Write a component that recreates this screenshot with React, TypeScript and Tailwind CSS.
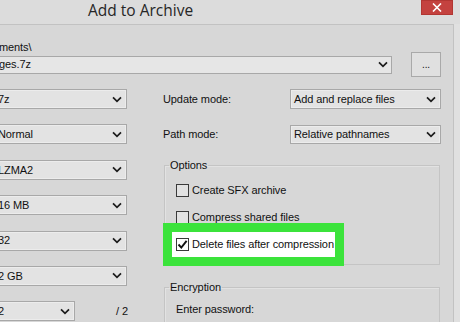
import type { ReactNode } from 'react'

const Chevron = () => (
  <svg width="10" height="7" viewBox="0 0 10 7" className="shrink-0">
    <path d="M1 1.3 L5 5.3 L9 1.3" fill="none" stroke="#1c1c1c" strokeWidth="1.7" />
  </svg>
)

function Combo({ value, className }: { value: string; className: string }) {
  return (
    <div
      className={`flex items-center justify-between border border-[#a8a8a8] bg-[#e3e3e3] pl-[7px] pr-[4px] shadow-[inset_0_0_0_1px_#ececec] ${className}`}
    >
      <span className="whitespace-nowrap">{value}</span>
      <Chevron />
    </div>
  )
}

function CheckRow({ label, checked, highlight }: { label: string; checked?: boolean; highlight?: boolean }) {
  return (
    <div
      className={`flex h-[25px] w-[163px] items-center gap-[3px] pl-[4px] ${
        highlight ? 'bg-white outline-solid outline-[9px] outline-[#3be33b]' : ''
      }`}
    >
      <div
        className={`flex h-[13px] w-[13px] shrink-0 items-center justify-center border border-[#3a3a3a] ${
          checked ? 'bg-white' : 'bg-[#e2e2e2]'
        }`}
      >
        {checked && (
          <svg width="11" height="11" viewBox="0 0 11 11">
            <path d="M1.5 5.5 L4.3 8.6 L9.6 1.8" fill="none" stroke="#111" strokeWidth="1.9" />
          </svg>
        )}
      </div>
      <span className="whitespace-nowrap">{label}</span>
    </div>
  )
}

function Group({ title, children, className }: { title: string; children: ReactNode; className?: string }) {
  return (
    <fieldset className={`ml-[1px] mr-[1px] border border-[#c4c4c4] shadow-[inset_1px_1px_0_#e2e2e2] ${className ?? ''}`}>
      <legend className="ml-[4px] px-[1px] leading-[14px]">{title}</legend>
      {children}
    </fieldset>
  )
}

export default function App() {
  const leftCombos = ['7z', 'Normal', 'LZMA2', '16 MB', '32', '2 GB']

  return (
    <div className="h-[322px] w-[460px] overflow-hidden bg-[#dcdcdc] text-[11px] tracking-[-0.1px] text-[#111] [font-family:'Liberation_Sans',Arial,sans-serif]">
      {/* title bar */}
      <div className="flex h-[24px] items-start">
        <div className="pl-[88px] text-[15.5px] leading-[20px] tracking-normal text-[#262626] [font-family:'Open_Sans','Noto_Sans',sans-serif]">
          Add to Archive
        </div>
        <div className="ml-auto mr-[7px] flex h-[15px] w-[32px] items-center justify-center bg-[#c4423f] shadow-[inset_0_0_0_1px_#b23632]">
          <svg width="10" height="9" viewBox="0 0 10 9">
            <path d="M1 0.5 L9 8.5 M9 0.5 L1 8.5" stroke="#fff" strokeWidth="1.6" />
          </svg>
        </div>
      </div>

      <div className="flex">
        {/* client area */}
        <div className="h-[298px] w-[454px] border-r border-t border-[#c2c2c2] bg-[#d7d7d7] pt-[15px]">
          <div className="-ml-[1px] leading-[14px]">ments\</div>
          <div className="-mt-[2px] flex items-center">
            <div className="-ml-[10px] flex h-[18px] w-[402px] items-center justify-between border border-[#a8a8a8] bg-[#e6e6e6] pl-[8px] pr-[3px]">
              <span>ges.7z</span>
              <Chevron />
            </div>
            <div className="ml-[19px] flex h-[25px] w-[30px] items-end justify-center border border-[#a9a9a9] bg-[#e0e0e0] pb-[6px] text-[10px] leading-[10px]">
              ...
            </div>
          </div>

          <div className="mt-[12px] flex">
            {/* left column */}
            <div className="-ml-[10px] flex w-[137px] flex-col gap-[15.4px]">
              {leftCombos.map((v) => (
                <Combo key={v} value={v} className="h-[20px] w-full" />
              ))}
              <div className="flex h-[20px] items-center justify-between">
                <Combo value="2" className="h-[20px] w-[85px]" />
                <span className="mr-[-1px]">/ 2</span>
              </div>
            </div>

            {/* right column */}
            <div className="ml-[36px] flex w-[278px] flex-col">
              <div className="flex h-[20px] items-center justify-between">
                <span>Update mode:</span>
                <Combo value="Add and replace files" className="h-[20px] w-[151px] !pl-[3px]" />
              </div>
              <div className="mt-[16px] flex h-[19px] items-center justify-between">
                <span>Path mode:</span>
                <Combo value="Relative pathnames" className="h-[19px] w-[151px] !pl-[3px]" />
              </div>

              <Group title="Options" className="mt-[14px] pb-[7px] pt-[6px]">
                <div className="ml-[7px] flex flex-col gap-[2px]">
                  <CheckRow label="Create SFX archive" />
                  <CheckRow label="Compress shared files" />
                  <CheckRow label="Delete files after compression" checked highlight />
                </div>
              </Group>

              <Group title="Encryption" className="mt-[15px] h-[70px] pt-[8px]">
                <div className="pl-[11px] leading-[14px]">Enter password:</div>
              </Group>
            </div>
          </div>
        </div>
        <div className="h-[298px] flex-1 bg-[#e0e0e0]" />
      </div>
    </div>
  )
}
